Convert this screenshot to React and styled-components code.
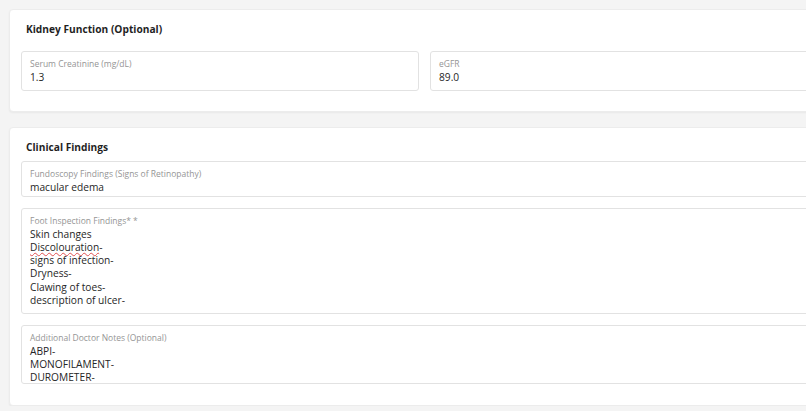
import React from "react";
import styled, { createGlobalStyle } from "styled-components";

const GlobalStyle = createGlobalStyle`
  html, body {
    margin: 0;
    padding: 0;
    background: #f4f4f4;
    overflow: hidden;
  }
  body {
    font-family: "Open Sans", "Noto Sans", sans-serif;
    color: #222;
  }
`;

const Page = styled.div`
  display: flex;
  flex-direction: column;
  gap: 15px;
  padding: 9px 0 0 9px;
  width: 831px;
`;

const Card = styled.section`
  background: #fff;
  border: 1px solid #ececec;
  border-radius: 4px;
  box-shadow: 0 1px 2px rgba(0, 0, 0, 0.05);
  padding: ${(p) => p.$pad || "11px 11px 20px"};
`;

const Title = styled.h3`
  margin: 0 0 ${(p) => p.$gap || "14px"} 5px;
  font-size: 10.2px;
  font-weight: 700;
  color: #1f1f1f;
  line-height: 16px;
`;

const Row = styled.div`
  display: grid;
  grid-template-columns: 1fr 1fr;
  gap: 11px;
`;

const Stack = styled.div`
  display: flex;
  flex-direction: column;
  gap: 11px;
`;

const Field = styled.div`
  border: 1px solid #e2e2e2;
  border-radius: 3px;
  background: #fff;
  padding: 6px 8px 0;
  height: ${(p) => p.$h}px;
  box-sizing: border-box;
  overflow: hidden;
`;

const Label = styled.div`
  font-size: 8.5px;
  color: #959595;
  line-height: 12.5px;
`;

const Value = styled.div`
  font-size: 10.2px;
  color: #262626;
  line-height: 13.3px;
  white-space: pre;
`;

const Misspelled = styled.span`
  text-decoration: underline wavy #e05050;
  text-decoration-thickness: 1px;
  text-underline-offset: 1px;
`;

const footLines = [
  "Skin changes",
  "Discolouration-",
  "signs of infection-",
  "Dryness-",
  "Clawing of toes-",
  "description of ulcer-",
];

const notesLines = ["ABPI-", "MONOFILAMENT-", "DUROMETER-"];

const App = () => {
  return (
    <>
      <GlobalStyle />
      <Page>
        <Card>
          <Title>Kidney Function (Optional)</Title>
          <Row>
            <Field $h={40}>
              <Label>Serum Creatinine (mg/dL)</Label>
              <Value>1.3</Value>
            </Field>
            <Field $h={40}>
              <Label>eGFR</Label>
              <Value>89.0</Value>
            </Field>
          </Row>
        </Card>

        <Card $pad="11px 11px 21px">
          <Title $gap="6px">Clinical Findings</Title>
          <Stack>
            <Field $h={36}>
              <Label>Fundoscopy Findings (Signs of Retinopathy)</Label>
              <Value>macular edema</Value>
            </Field>
            <Field $h={106}>
              <Label>Foot Inspection Findings* *</Label>
              {footLines.map((line) => (
                <Value key={line}>
                  {line === "Discolouration-" ? (
                    <>
                      <Misspelled>Discolouration</Misspelled>-
                    </>
                  ) : (
                    line
                  )}
                </Value>
              ))}
            </Field>
            <Field $h={59}>
              <Label>Additional Doctor Notes (Optional)</Label>
              {notesLines.map((line) => (
                <Value key={line}>{line}</Value>
              ))}
            </Field>
          </Stack>
        </Card>
      </Page>
    </>
  );
};

export default App;
